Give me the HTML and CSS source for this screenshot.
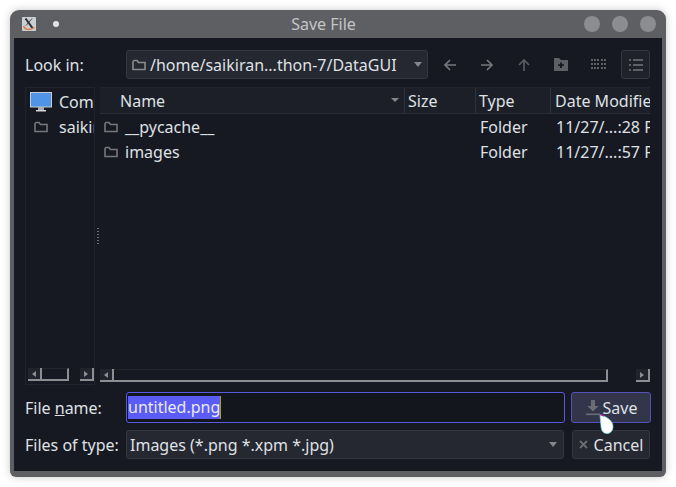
FILE: index.html

```html
<!DOCTYPE html>
<html lang="en">
<head>
    <meta charset="UTF-8">
    <title>Save File</title>
    <link rel="stylesheet" href="styles.css">
</head>
<body>
    <div class="window">
        <div class="titlebar">
            <svg class="app-icon" width="14" height="14" viewBox="0 0 14 14">
                <rect width="14" height="14" rx="1" fill="#c9cfd2"/>
                <path d="M3.5 1.5 L10.5 11" stroke="#2c2c30" stroke-width="2"/>
                <path d="M10 1.5 L4 8.5" stroke="#3a3a40" stroke-width="0.9"/>
                <path d="M1.5 9 C3 13 8 13.5 12.5 10.5" stroke="#dc7a4c" stroke-width="1.4" fill="none"/>
            </svg>
            <span class="pin"></span>
            <span class="title">Save File</span>
            <span class="win-btns"><i></i><i></i><i></i></span>
        </div>

        <div class="content">
            <div class="row toolbar">
                <label class="lbl">Look in:</label>
                <div class="combo path">
                    <svg class="folder" width="14" height="12" viewBox="0 0 14 12"><path d="M1 2.5 V10.5 H13 V3.5 H6.5 L5 1.5 H2 Z" fill="none" stroke="#8b8c90" stroke-width="1.6"/></svg>
                    <span class="combo-text">/home/saikiran...thon-7/DataGUI</span>
                    <span class="arrow"></span>
                </div>
                <div class="tools">
                    <svg width="14" height="14" viewBox="0 0 14 14"><path d="M13 7 H2 M7 2 L2 7 L7 12" fill="none" stroke="#77787c" stroke-width="1.7"/></svg>
                    <svg width="14" height="14" viewBox="0 0 14 14"><path d="M1 7 H12 M7 2 L12 7 L7 12" fill="none" stroke="#77787c" stroke-width="1.7"/></svg>
                    <svg width="14" height="14" viewBox="0 0 14 14"><path d="M7 13 V2 M2 7 L7 2 L12 7" fill="none" stroke="#5a5b60" stroke-width="1.7"/></svg>
                    <svg width="14" height="13" viewBox="0 0 14 13"><path d="M0 0 H5 L7 2 H14 V13 H0 Z" fill="#5f6065"/><path d="M7 4.5 V10 M4.2 7.2 H9.8" stroke="#15171f" stroke-width="1.8"/></svg>
                    <svg width="15" height="13" viewBox="0 0 15 13" fill="#5f6065">
                        <rect x="0" y="1" width="2" height="2"/><rect x="3" y="1" width="2" height="2"/><rect x="6" y="1" width="2" height="2"/><rect x="10" y="1" width="2" height="2"/><rect x="13" y="1" width="2" height="2"/>
                        <rect x="0" y="5" width="2" height="2"/><rect x="3" y="5" width="2" height="2"/><rect x="6" y="5" width="2" height="2"/><rect x="10" y="5" width="2" height="2"/><rect x="13" y="5" width="2" height="2"/>
                        <rect x="0" y="9" width="2" height="2"/><rect x="3" y="9" width="2" height="2"/><rect x="6" y="9" width="2" height="2"/><rect x="10" y="9" width="2" height="2"/><rect x="13" y="9" width="2" height="2"/>
                    </svg>
                    <span class="tool-on">
                        <svg width="14" height="12" viewBox="0 0 14 12" fill="#5f6065">
                            <rect x="0" y="0" width="2" height="2"/><rect x="4" y="0" width="10" height="2"/>
                            <rect x="0" y="5" width="2" height="2"/><rect x="4" y="5" width="10" height="2"/>
                            <rect x="0" y="10" width="2" height="2"/><rect x="4" y="10" width="10" height="2"/>
                        </svg>
                    </span>
                </div>
            </div>

            <div class="panes">
                <div class="side">
                    <div class="side-list">
                        <div class="side-item">
                            <svg class="monitor" width="22" height="20" viewBox="0 0 22 20">
                                <rect x="0.5" y="0.5" width="21" height="14.5" fill="#4f94e6" stroke="#c7ccd2"/>
                                <rect x="8" y="15" width="6" height="3" fill="#a9adb2"/>
                                <rect x="6" y="18" width="10" height="1.5" fill="#d5d7d9"/>
                            </svg>
                            <span>Computer</span>
                        </div>
                        <div class="side-item">
                            <svg class="folder small" width="14" height="12" viewBox="0 0 14 12"><path d="M1 2.5 V10.5 H13 V3.5 H6.5 L5 1.5 H2 Z" fill="none" stroke="#76777b" stroke-width="1.6"/></svg>
                            <span>saikiran</span>
                        </div>
                    </div>
                    <div class="hscroll">
                        <span class="sb-btn"><b class="tri-l"></b></span>
                        <span class="sb-thumb short"></span>
                        <span class="sb-gap"></span>
                        <span class="sb-btn"><b class="tri-r"></b></span>
                    </div>
                </div>

                <div class="grip"><i></i></div>

                <div class="files">
                    <div class="thead">
                        <div class="th c-name">Name<span class="sort"></span></div>
                        <div class="th c-size">Size</div>
                        <div class="th c-type">Type</div>
                        <div class="th c-date">Date Modified</div>
                    </div>
                    <div class="tbody">
                        <div class="tr">
                            <div class="td c-name"><svg class="folder small" width="14" height="12" viewBox="0 0 14 12"><path d="M1 2.5 V10.5 H13 V3.5 H6.5 L5 1.5 H2 Z" fill="none" stroke="#76777b" stroke-width="1.6"/></svg>__pycache__</div>
                            <div class="td c-size"></div>
                            <div class="td c-type">Folder</div>
                            <div class="td c-date">11/27/...:28 PM</div>
                        </div>
                        <div class="tr">
                            <div class="td c-name"><svg class="folder small" width="14" height="12" viewBox="0 0 14 12"><path d="M1 2.5 V10.5 H13 V3.5 H6.5 L5 1.5 H2 Z" fill="none" stroke="#76777b" stroke-width="1.6"/></svg>images</div>
                            <div class="td c-size"></div>
                            <div class="td c-type">Folder</div>
                            <div class="td c-date">11/27/...:57 PM</div>
                        </div>
                    </div>
                    <div class="hscroll">
                        <span class="sb-btn"><b class="tri-l"></b></span>
                        <span class="sb-thumb long"></span>
                        <span class="sb-btn end"><b class="tri-r"></b></span>
                    </div>
                </div>
            </div>

            <div class="row name-row">
                <label class="lbl">File <u>n</u>ame:</label>
                <div class="name-input"><span class="sel">untitled.png</span><span class="caret"></span></div>
                <div class="btn save">
                    <svg width="16" height="16" viewBox="0 0 16 16"><path d="M6 0 H10 V6 H13.5 L8 11.5 L2.5 6 H6 Z" fill="#6c6d74"/><rect x="1" y="13.5" width="14" height="1.6" fill="#6c6d74"/></svg>
                    <span>Save</span>
                </div>
            </div>

            <div class="row type-row">
                <label class="lbl">Files of type:</label>
                <div class="combo types">
                    <span class="combo-text">Images (*.png *.xpm *.jpg)</span>
                    <span class="arrow"></span>
                </div>
                <div class="btn cancel">
                    <svg width="9" height="9" viewBox="0 0 9 9"><path d="M1 1 L8 8 M8 1 L1 8" stroke="#6c6d72" stroke-width="1.8"/></svg>
                    <span>Cancel</span>
                </div>
            </div>
        </div>

        <svg class="cursor" width="15" height="20" viewBox="0 0 15 20">
            <path d="M1 1 L3 1.5 C8 3 14 7 14 12.5 C14 17 11 19.5 8 19.5 C4 19.5 2 16 2 12 Z" fill="#fff" stroke="#7fe3e8" stroke-width="0.7"/>
            <path d="M1 0.5 L5 2" stroke="#b02a9c" stroke-width="1.2"/>
        </svg>
    </div>
</body>
</html>
```

FILE: styles.css

```css
* { box-sizing: border-box; }
html, body { margin: 0; height: 100%; }
body { background: #fff; padding: 10px; font-family: "Noto Sans", sans-serif; font-size: 16px; color: #dfe1e5; overflow: hidden; }

.window { position: relative; width: 656px; height: 467px; background: #5e5f63; border-radius: 9px 9px 6px 6px; box-shadow: 0 0 9px rgba(0,0,0,.22); padding: 0 4px 6px; display: flex; flex-direction: column; }

/* title bar */
.titlebar { position: relative; height: 28px; flex: none; display: flex; align-items: center; padding-left: 8px; }
.app-icon { flex: none; }
.pin { width: 6px; height: 6px; border-radius: 50%; background: #e4e4e6; margin-left: 17px; }
.title { position: absolute; left: 0; right: 29px; text-align: center; font-size: 16px; color: #c4c5c8; }
.win-btns { margin-left: auto; display: flex; gap: 12px; padding-right: 6px; position: relative; }
.win-btns i { width: 16px; height: 16px; border-radius: 50%; background: #8c8d90; }

/* dialog body */
.content { flex: 1; min-height: 0; background: #171922; padding: 12px 11px 12px 11px; display: flex; flex-direction: column; }
.row { display: flex; align-items: center; flex: none; }
.lbl { width: 101px; flex: none; white-space: nowrap; }

.combo { height: 29px; background: #252731; border: 1px solid #343640; border-radius: 3px; display: flex; align-items: center; padding: 0 5px 0 5px; white-space: nowrap; }
.combo-text { flex: 1; }
.arrow { width: 0; height: 0; border-left: 4px solid transparent; border-right: 4px solid transparent; border-top: 5px solid #85868b; }
.path { width: 302px; }
.path .folder { margin-right: 4px; flex: none; }

.toolbar { height: 29px; }
.tools { display: flex; align-items: center; margin-left: 15px; gap: 23px; }
.tool-on { width: 29px; height: 29px; background: #20222b; border: 1px solid #343640; border-radius: 3px; display: flex; align-items: center; justify-content: center; margin-left: -8px; }

/* panes */
.panes { flex: 1; min-height: 0; display: flex; margin: 8px 1px 0 0; }
.side { width: 70px; flex: none; border: 1px solid #21232d; display: flex; flex-direction: column; overflow: hidden; }
.side-list { flex: 1; min-height: 0; }
.side-item { height: 25px; display: flex; align-items: center; white-space: nowrap; padding-left: 4px; }
.side-item:first-child { margin-top: 1px; }
.monitor { flex: none; margin-right: 7px; }
.side-item .small { margin: 0 11px 0 4px; flex: none; }
.grip { width: 5px; flex: none; display: flex; align-items: center; justify-content: center; }
.grip i { width: 2px; height: 16px; background: repeating-linear-gradient(#6d6e73 0 1px, transparent 1px 3px); }

.files { flex: 1; min-width: 0; display: flex; flex-direction: column; overflow: hidden; border-top: 1px solid #21232d; }
.thead { display: flex; height: 26px; flex: none; background: #1d1f28; border-bottom: 1px solid #2a2c36; }
.th { display: flex; align-items: center; white-space: nowrap; border-right: 1px solid #2f313b; padding-left: 3px; position: relative; }
.th.c-name { padding-left: 20px; }
.c-name { width: 305px; flex: none; }
.c-size { width: 71px; flex: none; }
.c-type { width: 75px; flex: none; }
.c-date { flex: none; width: 120px; }
.th.c-date { border-right: none; padding-left: 4px; }
.sort { position: absolute; right: 5px; top: 10px; width: 0; height: 0; border-left: 4px solid transparent; border-right: 4px solid transparent; border-top: 4px solid #85868b; }
.tbody { flex: 1; min-height: 0; }
.tr { display: flex; height: 25px; align-items: center; white-space: nowrap; }
.td { display: flex; align-items: center; }
.td .small { margin: 0 7px 0 4px; flex: none; }
.td.c-type { padding-left: 4px; }
.td.c-date { padding-left: 5px; }

/* scrollbars */
.hscroll { height: 14px; flex: none; display: flex; margin-bottom: 2px; }
.sb-btn { width: 14px; height: 13px; flex: none; background: #22242d; border-bottom: 2px solid #8d8e92; border-right: 2px solid #8d8e92; display: flex; align-items: center; justify-content: center; }
.sb-btn b { width: 0; height: 0; border-top: 3px solid transparent; border-bottom: 3px solid transparent; }
.tri-l { border-right: 4px solid #8d8e92; }
.tri-r { border-left: 4px solid #8d8e92; }
.sb-thumb { height: 13px; border-top: 1px solid #24262f; border-bottom: 2px solid #8d8e92; border-right: 2px solid #8d8e92; background: #171922; }
.sb-thumb.short { width: 28px; }
.sb-gap { width: 12px; }
.sb-thumb.long { width: 494px; }
.sb-btn.end { margin-left: auto; margin-right: 0; }
.side .hscroll { padding-left: 2px; }

/* bottom rows */
.name-row { height: 31px; margin-top: 7px; }
.name-input { width: 439px; height: 31px; background: #14161e; border: 1px solid #5a5ae0; border-radius: 3px; display: flex; align-items: center; padding-left: 1px; }
.sel { background: #5b5bf5; color: #e9eaf5; height: 23px; line-height: 22px; }
.caret { width: 1px; height: 23px; background: #a8a020; }
.btn { display: flex; align-items: center; justify-content: center; border-radius: 3px; }
.save { width: 80px; height: 31px; margin-left: 6px; background: #33354a; border: 1px solid #5252b8; gap: 2px; }
.type-row { height: 29px; margin-top: 7px; }
.types { width: 438px; padding-left: 3px; padding-right: 6px; }
.cancel { width: 78px; height: 29px; margin-left: 8px; background: #252731; border: 1px solid #343640; gap: 6px; }

.cursor { position: absolute; left: 589px; top: 404px; }
```
